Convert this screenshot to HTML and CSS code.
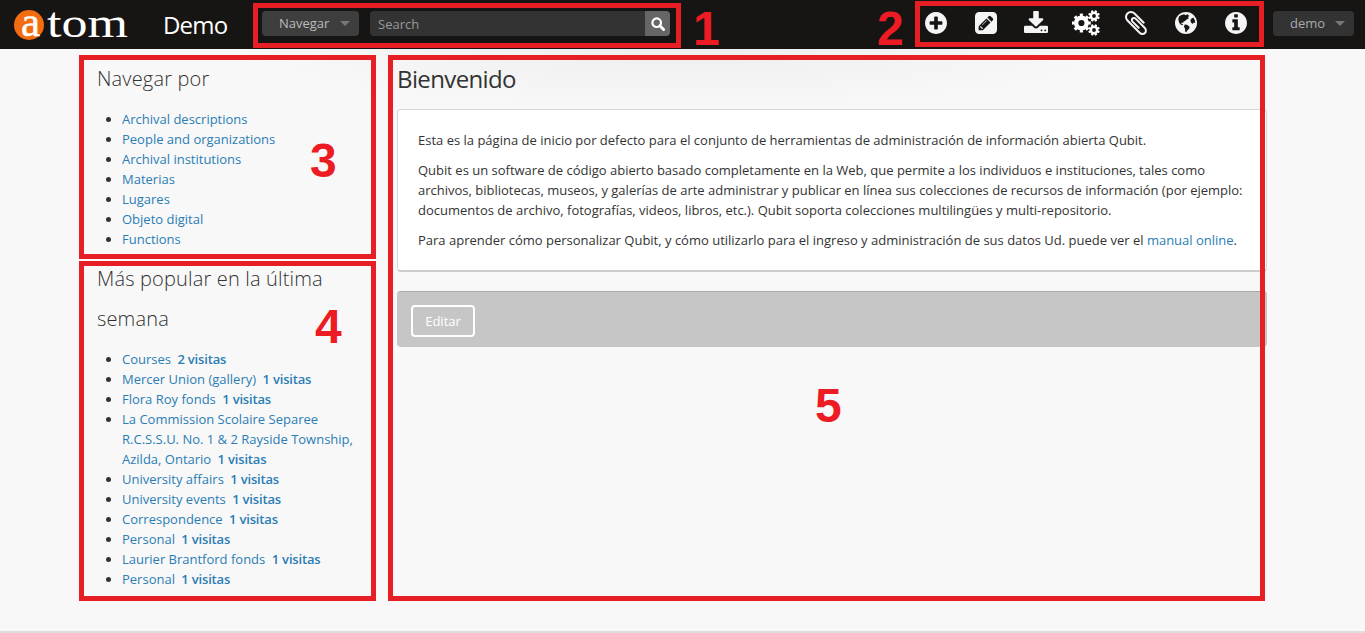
FILE: index.html
```html
<!DOCTYPE html>
<html lang="es">
<head>
<meta charset="utf-8">
<title>Demo</title>
<link rel="stylesheet" href="styles.css">
</head>
<body>
<header class="topbar">
  <div class="logo"><span class="logo-a">a</span><span class="logo-rest">tom</span></div>
  <div class="site-title">Demo</div>
  <div class="menu-button browse"><span>Navegar</span><i class="caret"></i></div>
  <div class="search"><span class="search-text">Search</span><span class="search-button"><svg width="14" height="14" viewBox="0 0 14 14"><circle cx="5.7" cy="5.7" r="4.3" fill="none" stroke="#fff" stroke-width="2.2"/><path d="M8.8 8.8L12.6 12.6" stroke="#fff" stroke-width="2.8" stroke-linecap="round"/></svg></span></div>
  <nav class="icons">
    <svg viewBox="128 128 1536 1536"><path d="M1344 960v-128q0-26-19-45t-45-19h-256v-256q0-26-19-45t-45-19h-128q-26 0-45 19t-19 45v256h-256q-26 0-45 19t-19 45v128q0 26 19 45t45 19h256v256q0 26 19 45t45 19h128q26 0 45-19t19-45v-256h256q26 0 45-19t19-45zm320-64q0 209-103 385.5t-279.5 279.5-385.5 103-385.5-103-279.5-279.5-103-385.5 103-385.5 279.5-279.5 385.5-103 385.5 103 279.5 279.5 103 385.5z"/></svg>
    <svg viewBox="0 0 1536 1536"><path d="M404 980l152 152-52 52h-56v-96h-96v-56zm414-390q14 13-3 30l-291 291q-17 17-30 3-14-13 3-30l291-291q17-17 30-3zm-274 690l544-544-288-288-544 544v288h288zm608-608l92-92q28-28 28-68t-28-68l-152-152q-28-28-68-28t-68 28l-92 92zm384-384v960q0 119-84.5 203.5t-203.5 84.5h-960q-119 0-203.5-84.5t-84.5-203.5v-960q0-119 84.5-203.5t203.5-84.5h960q119 0 203.5 84.5t84.5 203.5z"/></svg>
    <svg class="download" viewBox="64 0 1664 1536"><path d="M1344 1344q0-26-19-45t-45-19-45 19-19 45 19 45 45 19 45-19 19-45zm256 0q0-26-19-45t-45-19-45 19-19 45 19 45 45 19 45-19 19-45zm128-224v320q0 40-28 68t-68 28h-1472q-40 0-68-28t-28-68v-320q0-40 28-68t68-28h465l135 136q58 56 136 56t136-56l136-136h464q40 0 68 28t28 68zm-325-569q17 41-14 70l-448 448q-18 19-45 19t-45-19l-448-448q-31-29-14-70 17-39 59-39h256v-448q0-26 19-45t45-19h256q26 0 45 19t19 45v448h256q42 0 59 39z"/></svg>
    <svg class="gears" viewBox="0 0 28 26"><g fill="none" stroke="#fff"><circle cx="9.4" cy="13" r="5.3" stroke-width="4.4"/><circle cx="9.4" cy="13" r="8" stroke-width="2.8" pathLength="80" stroke-dasharray="5 5" stroke-dashoffset="2.5"/><g id="small-gear"><circle cx="22" cy="6" r="3.2" stroke-width="2.6"/><circle cx="22" cy="6" r="4.9" stroke-width="1.8" pathLength="80" stroke-dasharray="5.4 4.6" stroke-dashoffset="-2.3"/></g><use href="#small-gear" y="14"/></g></svg>
    <svg viewBox="196 128 1408 1536"><path d="M1596 1385q0 117-79 196t-196 79q-135 0-235-100l-777-776q-113-115-113-271 0-159 110-270t269-111q158 0 273 113l605 606q10 10 10 22 0 16-30.5 46.5t-46.5 30.5q-13 0-23-10l-606-607q-79-77-181-77-106 0-179 75t-73 181q0 105 76 181l776 777q63 63 145 63 64 0 106-42t42-106q0-82-63-145l-581-581q-26-24-60-24-29 0-48 19t-19 48q0 32 25 59l410 410q10 10 10 22 0 16-31 47t-47 31q-12 0-22-10l-410-410q-63-61-63-149 0-82 57-139t139-57q88 0 149 63l581 581q100 98 100 235z"/></svg>
    <svg viewBox="0 0 22 22"><circle cx="11" cy="11" r="11"/><path fill="#171513" d="M4 4.6L6.4 2.9 9.3 2.3 10.5 3.2 12.6 2.3 14.2 4 12.8 5.2 14 6.2 11.6 7.6 10 9.1 8.4 9.8 8.2 11 6.8 10.4 6.2 11.6 8.3 12.6 7.4 13.2 5.2 12.2 3.9 10 3.3 7ZM9.8 12.4L12 12.8 14.6 14.8 14.2 16.8 12.2 18.4 11.2 20.4 10.2 19.6 10 16.8 8.9 14.6ZM16.2 6.8L18.4 5.6 19.8 8.2 20.3 11 18.8 10.6 17.6 12 16 10.6 15.4 8.6Z"/></svg>
    <svg viewBox="128 128 1536 1536"><path d="M1152 1376v-160q0-14-9-23t-23-9h-96v-512q0-14-9-23t-23-9h-320q-14 0-23 9t-9 23v160q0 14 9 23t23 9h96v320h-96q-14 0-23 9t-9 23v160q0 14 9 23t23 9h448q14 0 23-9t9-23zm-128-896v-160q0-14-9-23t-23-9h-192q-14 0-23 9t-9 23v160q0 14 9 23t23 9h192q14 0 23-9t9-23zm640 416q0 209-103 385.5t-279.5 279.5-385.5 103-385.5-103-279.5-279.5-103-385.5 103-385.5 279.5-279.5 385.5-103 385.5 103 279.5 279.5 103 385.5z"/></svg>
  </nav>
  <div class="menu-button user"><span>demo</span><i class="caret"></i></div>
</header>
<div class="page">
  <aside class="sidebar">
    <h2>Navegar por</h2>
    <ul>
      <li><a>Archival descriptions</a></li>
      <li><a>People and organizations</a></li>
      <li><a>Archival institutions</a></li>
      <li><a>Materias</a></li>
      <li><a>Lugares</a></li>
      <li><a>Objeto digital</a></li>
      <li><a>Functions</a></li>
    </ul>
    <h2>Más popular en la última<br>semana</h2>
    <ul>
      <li><a>Courses <b>2 visitas</b></a></li>
      <li><a>Mercer Union (gallery) <b>1 visitas</b></a></li>
      <li><a>Flora Roy fonds <b>1 visitas</b></a></li>
      <li><a>La Commission Scolaire Separee<br>R.C.S.S.U. No. 1 &amp; 2 Rayside Township,<br>Azilda, Ontario <b>1 visitas</b></a></li>
      <li><a>University affairs <b>1 visitas</b></a></li>
      <li><a>University events <b>1 visitas</b></a></li>
      <li><a>Correspondence <b>1 visitas</b></a></li>
      <li><a>Personal <b>1 visitas</b></a></li>
      <li><a>Laurier Brantford fonds <b>1 visitas</b></a></li>
      <li><a>Personal <b>1 visitas</b></a></li>
    </ul>
  </aside>
  <main class="main">
    <h1>Bienvenido</h1>
    <section class="card">
      <p>Esta es la página de inicio por defecto para el conjunto de herramientas de administración de información abierta Qubit.</p>
      <p>Qubit es un software de código abierto basado completamente en la Web, que permite a los individuos e instituciones, tales como<br>archivos, bibliotecas, museos, y galerías de arte administrar y publicar en línea sus colecciones de recursos de información (por ejemplo:<br>documentos de archivo, fotografías, videos, libros, etc.). Qubit soporta colecciones multilingües y multi-repositorio.</p>
      <p>Para aprender cómo personalizar Qubit, y cómo utilizarlo para el ingreso y administración de sus datos Ud. puede ver el <a>manual online</a>.</p>
    </section>
    <div class="actions"><span class="edit">Editar</span></div>
  </main>
</div>
<footer class="footer"></footer>
<div class="mark mark-1"></div><div class="mark mark-2"></div><div class="mark mark-3"></div><div class="mark mark-4"></div><div class="mark mark-5"></div>
<div class="num num-1">1</div><div class="num num-2">2</div><div class="num num-3">3</div><div class="num num-4">4</div><div class="num num-5">5</div>
</body>
</html>
```
FILE: styles.css
```css
* { box-sizing: border-box; }
body { margin: 0; height: 633px; overflow: hidden; position: relative; display: flex; flex-direction: column; background: #f8f8f8; color: #333; font: 13px/20px "Open Sans", sans-serif; }
a { color: #2a7db5; }
.topbar { height: 49px; flex: none; display: flex; align-items: flex-start; background: #171513; padding-left: 14px; }
.topbar > * { flex-shrink: 0; }
.logo { width: 149px; height: 48px; display: flex; color: #fff; font: 43px/48px "Liberation Serif", serif; }
.logo-a { width: 30px; height: 30px; margin-top: 10px; border-radius: 50%; background: #f36c10; line-height: 23px; text-align: center; font-size: 43px; padding-left: 3px; -webkit-text-stroke: .5px #fff; }
.logo-rest { margin-left: 3px; line-height: 45px; transform: scaleX(1.21); transform-origin: left; }
.site-title { width: 99px; color: #fff; font-size: 24px; line-height: 49px; letter-spacing: -.8px; }
.menu-button { height: 25px; margin-top: 11px; display: flex; align-items: center; justify-content: space-between; border-radius: 4px; color: #bbb; background: #3e3e3e; line-height: 24px; }
.menu-button span { margin-top: -1px; }
.browse { width: 97px; padding: 0 9px 0 17px; }
.user { width: 81px; margin-left: 12px; padding: 0 9px 0 17px; background: #333; color: #aaa; }
.caret { border: 5px solid transparent; border-top-color: #777; border-bottom: 0; }
.search { width: 300px; height: 25px; margin: 11px 0 0 11px; display: flex; border-radius: 4px; overflow: hidden; background: #333; color: #999; }
.search-text { flex: 1; padding-left: 8px; line-height: 26px; }
.search-button { width: 25px; display: flex; align-items: center; justify-content: center; background: #666; }
.icons { display: flex; width: 350px; margin: 10px 0 0 241px; }
.icons svg { width: 22px; height: 26px; margin: 0 14px; fill: #f5f5f5; overflow: visible; flex: none; }
.icons svg.download { width: 24px; margin: -1px 13px 0; }
.icons svg.gears { width: 28px; margin: 0 11px; }
.page { flex: 1; display: flex; padding: 10px 0 0 97px; background: radial-gradient(ellipse 450px 60px at 50% 0, #eee, rgba(248,248,248,0)); }
.sidebar { width: 300px; flex: none; white-space: nowrap; }
h1, h2 { margin: 0; font-weight: 300; line-height: 40px; }
h2 { font-size: 20px; letter-spacing: .16px; }
h1 { font-size: 24px; font-weight: 400; letter-spacing: -.62px; }
ul { margin: 10px 0; padding-left: 25px; }
b { font-weight: 600; margin-left: 3px; letter-spacing: -.17px; }
.main { width: 870px; }
.card { height: 163px; margin-top: 10px; padding: 20px; background: #fff; border: 1px solid #d8d8d8; border-bottom: 2px solid #ccc; border-radius: 4px; white-space: nowrap; }
p { margin: 0 0 10px; }
.actions { height: 56px; margin-top: 19px; padding: 13px 14px; background: #c6c6c6; border-top: 1px solid #aaa; border-radius: 4px; }
.edit { display: block; width: 64px; height: 32px; border: 2px solid #fff; border-radius: 4px; text-align: center; color: #fff; line-height: 28px; }
.footer { height: 2px; flex: none; background: #ddd; }
.mark { position: absolute; border: 5px solid #e81e25; }
.mark-1 { left: 253px; top: 3px; width: 428px; height: 45px; }
.mark-2 { left: 915px; top: 1px; width: 349px; height: 46px; }
.mark-3 { left: 79px; top: 55px; width: 297px; height: 204px; }
.mark-4 { left: 79px; top: 261px; width: 297px; height: 340px; }
.mark-5 { left: 388px; top: 55px; width: 877px; height: 546px; }
.num { position: absolute; color: #ed1c24; font: bold 48px/48px "Liberation Sans", sans-serif; }
.num-1 { left: 693px; top: 5px; }
.num-2 { left: 877px; top: 5px; }
.num-3 { left: 310px; top: 137px; }
.num-4 { left: 315px; top: 303px; }
.num-5 { left: 815px; top: 382px; }
```
